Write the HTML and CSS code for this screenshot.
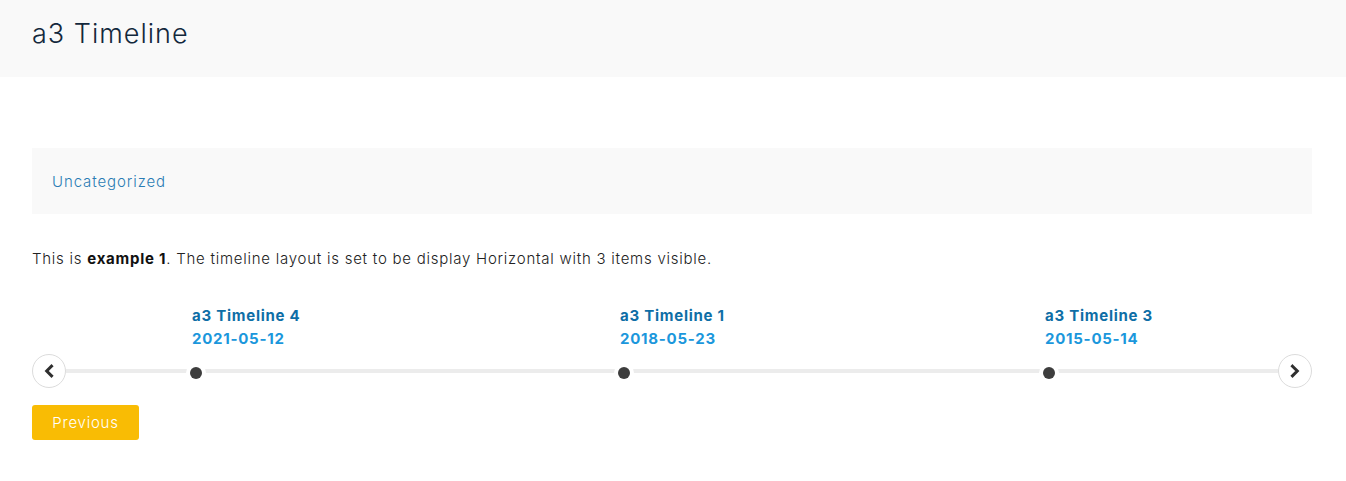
FILE: index.html
```html
<!DOCTYPE html>
<html lang="en">
<head>
    <meta charset="UTF-8">
    <meta name="viewport" content="width=device-width, initial-scale=1.0">
    <title>a3 Timeline</title>
    <link rel="stylesheet" href="styles.css">
</head>
<body>
    <header class="page-header">
        <h1>a3 Timeline</h1>
    </header>
    <main class="content">
        <div class="category-box">
            <a href="#">Uncategorized</a>
        </div>

        <p class="intro">This is <strong>example 1</strong>. The timeline layout is set to be display Horizontal with 3 items visible.</p>

        <div class="timeline">
            <button class="nav-btn" aria-label="Previous">
                <svg width="14" height="14" viewBox="0 0 14 14"><path d="M9.5 2.2 L4.7 7 L9.5 11.8" fill="none" stroke="#2f2f2f" stroke-width="3" stroke-linecap="square"/></svg>
            </button>
            <div class="track">
                <div class="items">
                    <div class="item item-1">
                        <div class="item-title">a3 Timeline 4</div>
                        <div class="item-date">2021-05-12</div>
                        <span class="dot"></span>
                    </div>
                    <div class="item item-2">
                        <div class="item-title">a3 Timeline 1</div>
                        <div class="item-date">2018-05-23</div>
                        <span class="dot"></span>
                    </div>
                    <div class="item item-3">
                        <div class="item-title">a3 Timeline 3</div>
                        <div class="item-date">2015-05-14</div>
                        <span class="dot"></span>
                    </div>
                </div>
            </div>
            <button class="nav-btn" aria-label="Next">
                <svg width="14" height="14" viewBox="0 0 14 14"><path d="M4.5 2.2 L9.3 7 L4.5 11.8" fill="none" stroke="#2f2f2f" stroke-width="3" stroke-linecap="square"/></svg>
            </button>
        </div>

        <button class="prev-btn">Previous</button>
    </main>
</body>
</html>
```

FILE: styles.css
```css
body {
    font-family: Inter, 'Open Sans', sans-serif;
    font-weight: 300;
    color: #222;
    margin: 0;
    background: #fff;
    letter-spacing: 0.75px;
}
.page-header {
    background: #f9f9f9;
    height: 77px;
    padding: 0 32px;
    display: flex;
    align-items: center;
}
.page-header h1 {
    margin: 0 0 10px;
    font-size: 27px;
    font-weight: 300;
    color: #13283c;
    letter-spacing: 1px;
}
.content {
    padding: 71px 34px 0 32px;
}
.category-box {
    background: #f9f9f9;
    height: 66px;
    padding: 0 20px;
    display: flex;
    align-items: center;
}
.category-box a {
    color: #2a7cb4;
    font-size: 15px;
    text-decoration: none;
    letter-spacing: 0.9px;
}
.intro {
    font-size: 15px;
    margin: 36px 0 0;
    line-height: 18px;
}
.intro strong {
    font-weight: 700;
    color: #111;
}
.timeline {
    margin-top: 36px;
    display: flex;
    align-items: flex-end;
}
.nav-btn {
    width: 34px;
    height: 34px;
    border: 1px solid #dcdcdc;
    border-radius: 50%;
    background: #fff;
    padding: 0;
    display: flex;
    align-items: center;
    justify-content: center;
    flex-shrink: 0;
    cursor: pointer;
}
.track {
    flex: 1;
    position: relative;
    height: 84px;
}
.track::before {
    content: "";
    position: absolute;
    left: 0;
    right: 0;
    bottom: 15px;
    height: 4px;
    background: #ececec;
}
.items {
    display: flex;
    padding-left: 126px;
    height: 100%;
}
.item {
    position: relative;
    display: flex;
    flex-direction: column;
}
.item-1 { width: 428px; }
.item-2 { width: 425px; }
.item-title {
    font-size: 15px;
    font-weight: 700;
    color: #0e6ea6;
    line-height: 23px;
}
.item-date {
    font-size: 15px;
    font-weight: 700;
    color: #1b97dc;
    line-height: 23px;
}
.dot {
    position: absolute;
    left: -2px;
    bottom: 9px;
    width: 12px;
    height: 12px;
    border-radius: 50%;
    background: #3d3d3d;
    box-shadow: 0 0 0 4px #fff;
}
.prev-btn {
    margin-top: 17px;
    background: #f9bc04;
    color: #fff;
    border: none;
    border-radius: 3px;
    width: 107px;
    height: 35px;
    font-family: inherit;
    font-weight: 300;
    font-size: 15px;
    letter-spacing: 0.75px;
    cursor: pointer;
}
```
